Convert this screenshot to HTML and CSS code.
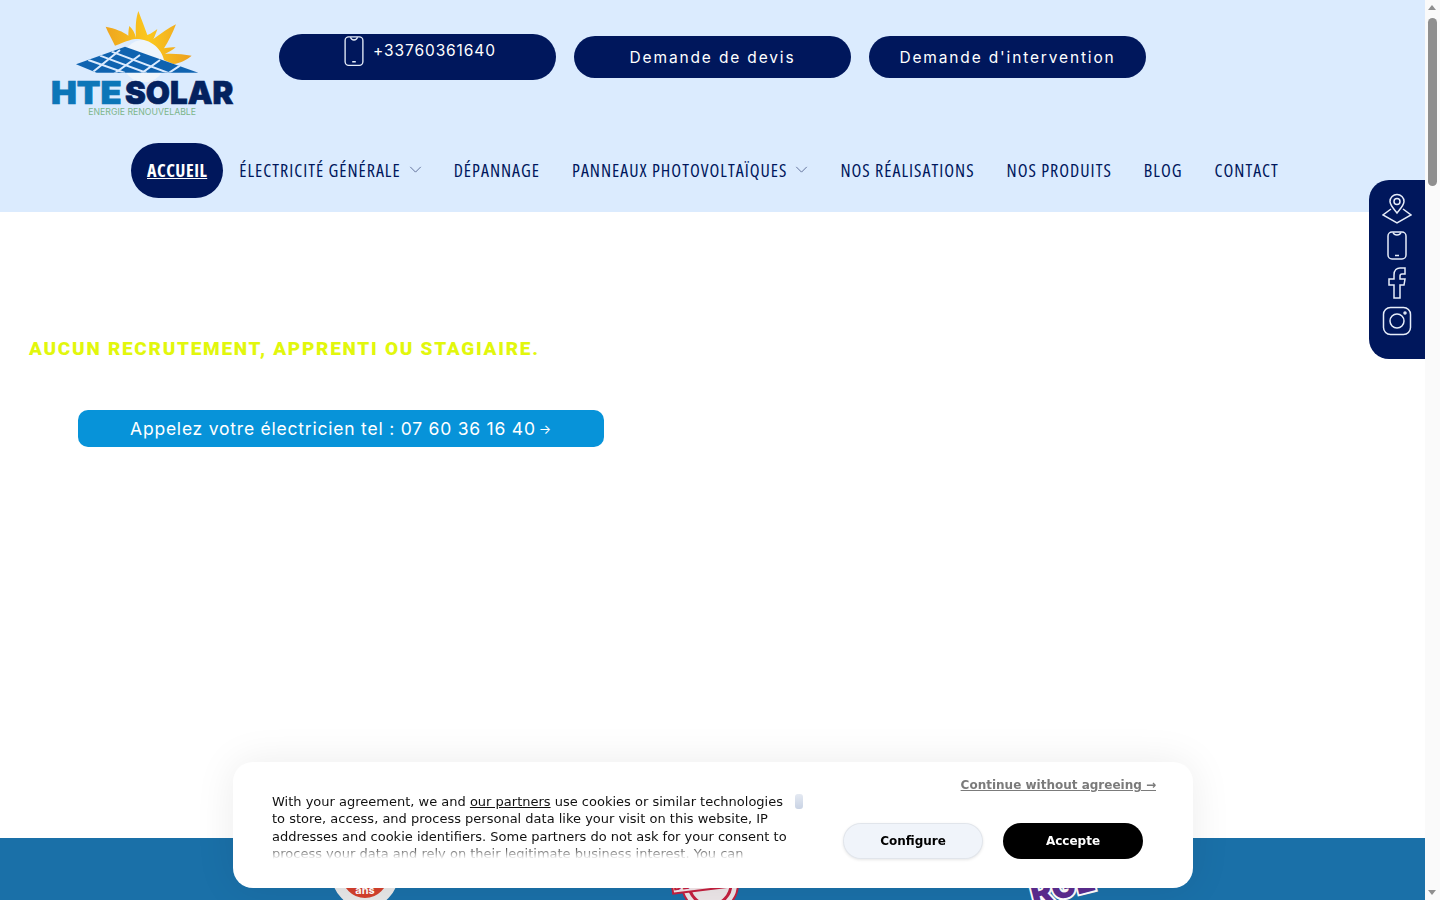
FILE: index.html
```html
<!DOCTYPE html>
<html lang="fr">
  <head>
    <meta charset="utf-8">
    <title>HTE Solar</title>
    <meta name="viewport" content="width=device-width, initial-scale=1">
    <link rel="stylesheet" href="styles.css">
  </head>

  <body>
    <header class="site-header">
      <div class="top-row">
        <a class="logo" href="#">
          <svg viewBox="0 0 600 345" width="200" height="115">
            <defs>
              <linearGradient id="sunGrad" x1="0" y1="0" x2="1" y2="0">
                <stop offset="0" stop-color="#eea51f"/>
                <stop offset="0.5" stop-color="#fbc81e"/>
                <stop offset="1" stop-color="#eda020"/>
              </linearGradient>
              <clipPath id="panelClip">
                <polygon points="108,178 255,125 475,203 170,203"/>
              </clipPath>
            </defs>
            <circle cx="312" cy="168" r="64" fill="#eef5fc"/>
            <path fill="url(#sunGrad)" d="M197 65C225 70 250 80 265 92C265 80 266 72 268 63C278 72 285 85 288 98C286 60 288 40 295 18C305 45 315 70 322 90C335 85 345 78 352 72C348 85 345 92 340 102C365 85 385 68 408 58C398 85 385 110 372 130C385 128 395 127 407 127C398 135 385 142 375 147C400 145 430 148 455 152C440 165 420 175 400 177L372 165C365 130 330 100 285 102C260 106 240 118 225 122C215 100 205 85 197 65Z"/>
            <polygon points="108,178 255,125 475,203 170,203" fill="#0f63b0"/>
            <g clip-path="url(#panelClip)" stroke="#dbebfe" stroke-width="6">
              <path d="M145 165L255 204M180 152L320 204M215 140L385 204"/>
              <path d="M150 208L240 135M220 208L300 150M300 208L360 165M380 208L420 182"/>
            </g>
            <text class="logo-hte" x="33" y="297" textLength="212" lengthAdjust="spacingAndGlyphs">HTE</text>
            <text class="logo-solar" x="255" y="297" textLength="325" lengthAdjust="spacingAndGlyphs">SOLAR</text>
            <text class="logo-sub" x="145" y="331" textLength="323" lengthAdjust="spacingAndGlyphs">ENERGIE RENOUVELABLE</text>
          </svg>
        </a>
        <div class="top-buttons">
          <a class="pill pill-phone" href="#">
            <svg class="line-icon phone-small" viewBox="0 0 24 36"><rect x="2" y="1" width="20" height="32" rx="4"/><path d="M8 1.500q1 3 4 3t4-3M10 29h4"/></svg>
            <span>+33760361640</span>
          </a>
          <a class="pill" href="#">Demande de devis</a>
          <a class="pill" href="#">Demande d'intervention</a>
        </div>
      </div>
      <nav class="main-nav">
        <a class="nav-item active" href="#">Accueil</a>
        <a class="nav-item" href="#">Électricité générale <svg class="chevron" viewBox="0 0 14 8"><path d="M1 1l6 6 6-6"/></svg></a>
        <a class="nav-item" href="#">Dépannage</a>
        <a class="nav-item" href="#">Panneaux photovoltaïques <svg class="chevron" viewBox="0 0 14 8"><path d="M1 1l6 6 6-6"/></svg></a>
        <a class="nav-item" href="#">Nos réalisations</a>
        <a class="nav-item" href="#">Nos produits</a>
        <a class="nav-item" href="#">Blog</a>
        <a class="nav-item" href="#">Contact</a>
      </nav>
    </header>

    <aside class="side-bar">
      <svg class="line-icon" viewBox="0 0 30 32"><path d="M15 21c-4-5-7-8-7-11.500a7 7 0 0 1 14 0c0 3.500-3 6.500-7 11.500z"/><circle cx="15" cy="9.500" r="3"/><path d="M9 17l-8 6 14 8 14-8-8-6"/></svg>
      <svg class="line-icon" viewBox="0 0 30 32"><rect x="6" y="2" width="18" height="27" rx="4"/><path d="M11 2.500q1 2.500 4 2.500t4-2.500M13 25.500h4"/></svg>
      <svg class="line-icon" viewBox="0 0 30 32"><path d="M12 31V18H7v-6h5V8c0-5 3-7 6-7h5v6h-3c-2 0-2 1-2 2v3h5l-1 6h-4v13z"/></svg>
      <svg class="line-icon" viewBox="0 0 30 32"><rect x="1.500" y="2.500" width="27" height="27" rx="7"/><circle cx="15" cy="16" r="7"/><circle cx="23" cy="8" r="1"/></svg>
    </aside>

    <main class="content">
      <h2 class="notice">Aucun recrutement, apprenti ou stagiaire.</h2>
      <a class="call-button" href="#">Appelez votre électricien tel : 07 60 36 16 40<span class="arrow">→</span></a>
    </main>

    <footer class="site-footer">
      <div class="badge-ans"><span>ans</span></div>
      <svg class="badge-stamp" viewBox="0 0 100 50" width="100" height="50">
        <circle cx="50" cy="12" r="28" fill="#ece6e8" stroke="#c4203f" stroke-width="2"/>
        <circle cx="50" cy="12" r="21" fill="none" stroke="#c4203f" stroke-width="3"/>
        <g transform="rotate(-7 50 10)">
          <rect x="12" y="2" width="76" height="15" fill="#f3e6e9" stroke="#c4203f" stroke-width="2"/>
          <text class="stamp-text" x="50" y="14">DÉCENNALE</text>
        </g>
      </svg>
      <div class="badge-rge">RGE</div>
    </footer>

    <section class="cookie-box">
      <div class="cookie-text">
        <p>With your agreement, we and <u>our partners</u> use cookies or similar technologies to store, access, and process personal data like your visit on this website, IP addresses and cookie identifiers. Some partners do not ask for your consent to process your data and rely on their legitimate business interest. You can</p>
        <span class="cookie-scroll"></span>
      </div>
      <div class="cookie-actions">
        <a class="cookie-skip" href="#">Continue without agreeing →</a>
        <div class="cookie-buttons">
          <button class="cookie-btn cookie-config">Configure</button>
          <button class="cookie-btn cookie-accept">Accepte</button>
        </div>
      </div>
    </section>

    <div class="page-scroll">
      <span class="scroll-up"></span>
      <span class="scroll-thumb"></span>
      <span class="scroll-down"></span>
    </div>
  </body>
</html>
```

FILE: styles.css
```css
html, body {
  margin: 0;
  padding: 0;
  height: 900px;
  overflow: hidden;
}

body {
  padding-right: 15px;
  box-sizing: border-box;
  font-family: "Inter", "Liberation Sans", sans-serif;
  background: #fff;
  color: #00175c;
}

a {
  text-decoration: none;
  color: inherit;
}

.site-header {
  height: 212px;
  background: #dbebfe;
  box-sizing: border-box;
  padding-top: 5px;
}

.top-row {
  display: flex;
  height: 138px;
  padding-left: 40px;
}

.logo {
  display: block;
  width: 200px;
  height: 115px;
}

.logo-hte,
.logo-solar {
  font-family: "Inter", sans-serif;
  font-weight: 900;
  font-size: 96px;
  stroke-width: 2;
}

.logo-hte {
  fill: #0c76b8;
  stroke: #0c76b8;
}

.logo-solar {
  fill: #04225f;
  stroke: #04225f;
}

.logo-sub {
  font-family: "Inter", sans-serif;
  font-size: 26px;
  fill: #7db68b;
}

.top-buttons {
  display: flex;
  align-items: flex-start;
  gap: 18px;
  margin-left: 39px;
  padding-top: 31px;
}

.pill {
  display: flex;
  align-items: center;
  justify-content: center;
  width: 277px;
  height: 42px;
  border-radius: 21px;
  background: #00175c;
  color: #fff;
  font-size: 15.500px;
  letter-spacing: 1.850px;
}

.pill-phone {
  height: 46px;
  border-radius: 23px;
  margin-top: -2px;
  align-items: flex-start;
  gap: 8px;
  padding: 2px 0 0 4px;
  box-sizing: border-box;
  letter-spacing: 0.900px;
}

.pill-phone span {
  padding-top: 5px;
}

.line-icon {
  fill: none;
  stroke: #e6edf9;
  stroke-width: 1.500;
}

.phone-small {
  width: 22px;
  height: 32px;
}

.main-nav {
  display: flex;
  align-items: center;
  padding-left: 131px;
}

.nav-item {
  display: flex;
  align-items: center;
  height: 55px;
  box-sizing: border-box;
  padding: 0 16px 2px;
  border-radius: 28px;
  font-family: "Open Sans", "Liberation Sans", sans-serif;
  font-stretch: 75%;
  font-size: 18px;
  font-weight: 500;
  letter-spacing: 1px;
  text-transform: uppercase;
  white-space: nowrap;
}

.nav-item.active {
  background: #00175c;
  color: #fff;
  font-weight: 700;
  letter-spacing: 0.500px;
  text-decoration: underline;
}

.chevron {
  width: 13px;
  height: 7px;
  margin-left: 8px;
  fill: none;
  stroke: #52648f;
  stroke-width: 1;
}

.side-bar {
  position: fixed;
  top: 180px;
  right: 15px;
  width: 56px;
  height: 179px;
  box-sizing: border-box;
  padding-top: 12px;
  display: flex;
  flex-direction: column;
  align-items: center;
  gap: 5.500px;
  background: #00175c;
  border-radius: 20px 0 0 20px;
}

.side-bar svg {
  width: 30px;
  height: 32px;
}

.content {
  height: 626px;
  box-sizing: border-box;
  padding-top: 125px;
}

.notice {
  margin: 0 0 49px 29px;
  font-family: "Roboto", sans-serif;
  font-size: 19px;
  font-weight: 900;
  line-height: 24px;
  letter-spacing: 1.720px;
  text-transform: uppercase;
  color: #e2f70c;
}

.call-button {
  display: flex;
  align-items: center;
  justify-content: center;
  width: 526px;
  height: 37px;
  margin-left: 78px;
  border-radius: 10px;
  background: #0793d9;
  color: #fff;
  font-size: 17.500px;
  letter-spacing: 0.780px;
}

.arrow {
  font-size: 13px;
  margin-left: 3px;
}

.site-footer {
  display: flex;
  height: 62px;
  overflow: hidden;
  background: #1a70a8;
  padding-left: 332px;
}

.badge-ans {
  width: 66px;
  height: 66px;
  flex: none;
  margin-top: 4px;
  box-sizing: border-box;
  border-radius: 50%;
  border: 10px solid #e8e8e8;
  background: #d4402c;
  color: #fff;
  font-size: 11px;
  font-weight: 700;
  text-align: center;
  line-height: 76px;
}

.badge-stamp {
  flex: none;
  margin: 34px 0 0 262px;
}

.stamp-text {
  font-family: "Inter", sans-serif;
  font-size: 12px;
  font-weight: 800;
  fill: #c4203f;
  text-anchor: middle;
}

.badge-rge {
  margin: 29px 0 0 270px;
  height: 40px;
  color: #5b2c8f;
  font-size: 32px;
  line-height: 40px;
  font-weight: 900;
  -webkit-text-stroke: 4px #fff;
  paint-order: stroke fill;
  transform: rotate(-14deg);
}

.cookie-box {
  position: fixed;
  left: 233px;
  top: 762px;
  width: 960px;
  height: 126px;
  box-sizing: border-box;
  padding: 31px 37px 0 39px;
  display: flex;
  justify-content: space-between;
  background: #fff;
  border-radius: 20px;
  box-shadow: 0 0 40px rgba(0, 0, 0, 0.08);
  font-family: "DejaVu Sans", sans-serif;
}

.cookie-text {
  position: relative;
  width: 532px;
  height: 66px;
  overflow: hidden;
}

.cookie-text p {
  margin: 0;
  width: 522px;
  font-size: 13px;
  line-height: 17.330px;
  color: #111;
}

.cookie-text::after {
  content: "";
  position: absolute;
  left: 0;
  right: 0;
  bottom: 0;
  height: 14px;
  background: linear-gradient(rgba(255, 255, 255, 0), #fff);
}

.cookie-scroll {
  position: absolute;
  top: 1px;
  right: 1px;
  width: 8px;
  height: 15px;
  border-radius: 3px;
  background: linear-gradient(#e4e9f2, #c9d3e4);
}

.cookie-actions {
  display: flex;
  flex-direction: column;
  align-items: flex-end;
  margin-top: -15px;
  width: 310px;
}

.cookie-skip {
  font-size: 12px;
  font-weight: 700;
  color: #7b7b7b;
  text-decoration: underline;
}

.cookie-buttons {
  display: flex;
  gap: 20px;
  margin: 31px 13px 0 0;
}

.cookie-btn {
  width: 140px;
  height: 36px;
  border-radius: 18px;
  border: 0;
  font-family: "DejaVu Sans", sans-serif;
  font-size: 12px;
  font-weight: 700;
}

.cookie-config {
  background: #f0f4fa;
  color: #000;
  box-shadow: inset 0 0 0 1px rgba(0, 0, 0, 0.06), 0 1px 3px rgba(0, 0, 0, 0.1);
}

.cookie-accept {
  background: #000;
  color: #fff;
}

.page-scroll {
  position: fixed;
  top: 0;
  right: 0;
  bottom: 0;
  width: 15px;
  background: #fafafa;
}

.scroll-thumb {
  position: absolute;
  top: 18px;
  left: 3px;
  width: 9px;
  height: 168px;
  border-radius: 5px;
  background: #8f8f8f;
}

.scroll-up,
.scroll-down {
  position: absolute;
  left: 3px;
  width: 0;
  height: 0;
  border-left: 4.500px solid transparent;
  border-right: 4.500px solid transparent;
}

.scroll-up {
  top: 5px;
  border-bottom: 5px solid #8f8f8f;
}

.scroll-down {
  bottom: 5px;
  border-top: 5px solid #8f8f8f;
}
```
